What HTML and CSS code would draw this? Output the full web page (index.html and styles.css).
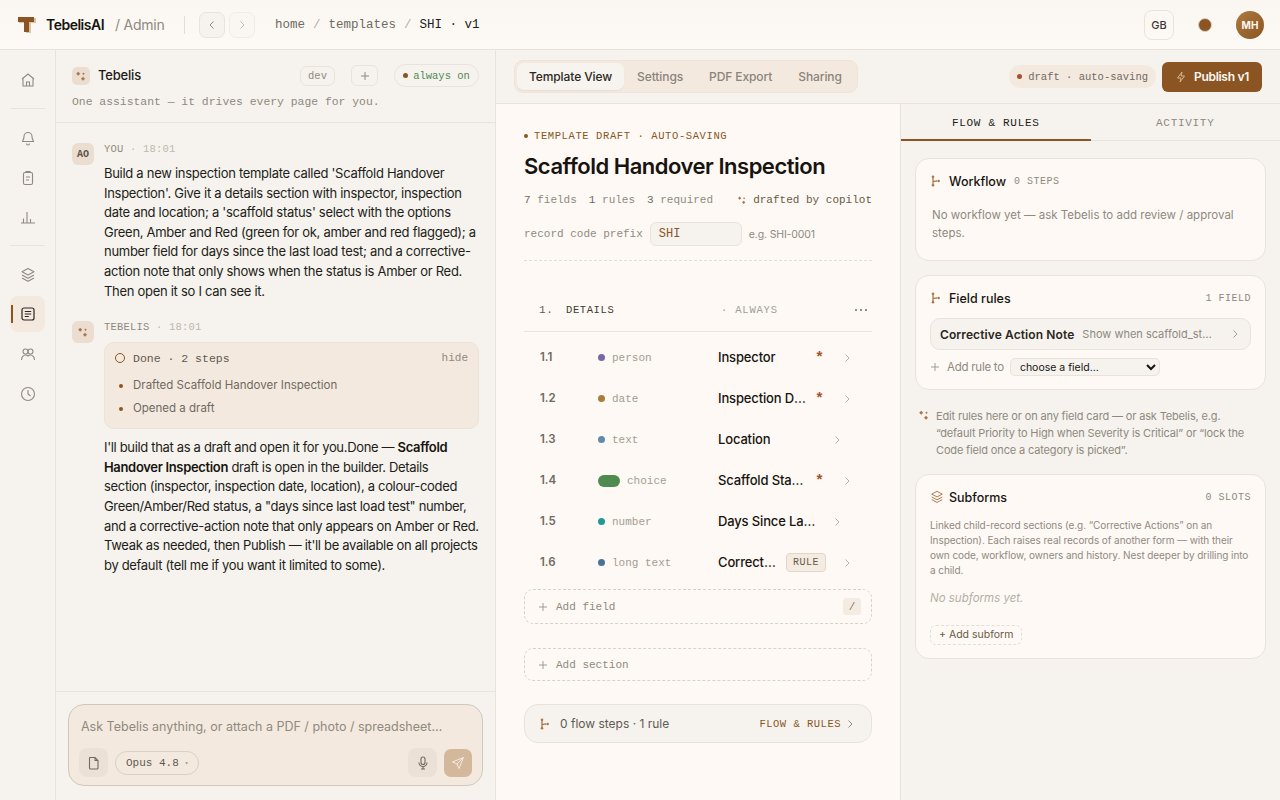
FILE: index.html
```html
<!DOCTYPE html>
<html lang="en">
<head>
<meta charset="utf-8">
<title>Scaffold Handover Inspection</title>
<link rel="stylesheet" href="styles.css">
</head>
<body>
<svg class="defs" width="0" height="0">
  <symbol id="spark" viewBox="0 0 12 12"><path d="M3.200 1.800l2 2-2 2-2-2zM8.500 2.600l1.200 1.200-1.200 1.200-1.200-1.200zM8 6.800l2 2-2 2-2-2z" fill="currentColor"/></symbol>
  <symbol id="branch" viewBox="0 0 12 12"><path d="M3 1.500v9M3 6.500c2 0 3-.5 4-.5" fill="none" stroke="currentColor" stroke-width="1.300"/><circle cx="3" cy="1.800" r="1.300" fill="currentColor"/><circle cx="3" cy="10.200" r="1.300" fill="currentColor"/><circle cx="8.600" cy="6" r="1.300" fill="currentColor"/></symbol>
  <symbol id="layers" viewBox="0 0 16 16"><path d="M8 1.500l6 3.200-6 3.200-6-3.200zM2 8l6 3.200L14 8M2 11l6 3.200 6-3.200" fill="none" stroke="currentColor" stroke-width="1.100" stroke-linejoin="round"/></symbol>
  <symbol id="chev" viewBox="0 0 10 10"><path d="M3.500 1.500L7 5 3.500 8.500" fill="none" stroke="currentColor" stroke-width="1"/></symbol>
  <symbol id="plus" viewBox="0 0 10 10"><path d="M5 1v8M1 5h8" fill="none" stroke="currentColor" stroke-width="1"/></symbol>
</svg>
<div class="app">
  <header class="topbar">
    <svg class="logo" width="18" height="18" viewBox="0 0 18 18"><path d="M1 2h17v5h-5v10H8V7H1z" fill="#d9c3a9"/><path d="M0 1h16v5h-5v10H6V6H0z" fill="#8a5522"/></svg>
    <span class="brand">TebelisAI</span>
    <span class="brand-sub">/ Admin</span>
    <span class="top-divider"></span>
    <button class="nav-btn"><svg width="10" height="10" viewBox="0 0 10 10"><path d="M6.500 1.500L3 5l3.500 3.500" fill="none" stroke="currentColor" stroke-width="1"/></svg></button>
    <button class="nav-btn nav-btn-off"><svg width="10" height="10"><use href="#chev"/></svg></button>
    <nav class="crumbs"><span>home</span><i>/</i><span>templates</span><i>/</i><b>SHI · v1</b></nav>
    <div class="top-right">
      <span class="lang">GB</span>
      <span class="status-dot"></span>
      <span class="avatar">MH</span>
    </div>
  </header>
  <div class="body">
    <aside class="rail">
      <a class="rail-item"><svg width="16" height="16" viewBox="0 0 16 16" fill="none" stroke="currentColor" stroke-width="1.100"><path d="M2 7l6-5 6 5M3 6.500V14h10V6.500M6.500 14v-4h3v4"/></svg></a>
      <span class="rail-sep"></span>
      <a class="rail-item"><svg width="16" height="16" viewBox="0 0 16 16" fill="none" stroke="currentColor" stroke-width="1.100"><path d="M4 5.500a4 4 0 018 0c0 3 1.500 4 1.500 5h-11C2.500 9.500 4 8.500 4 5.500zM6.500 12.500a1.500 1.500 0 003 0"/></svg></a>
      <a class="rail-item"><svg width="16" height="16" viewBox="0 0 16 16" fill="none" stroke="currentColor" stroke-width="1.100"><rect x="3.500" y="2.500" width="9" height="12" rx="1.500"/><path d="M6 2.500V1.500h4v1M6 7h4M6 10h3"/></svg></a>
      <a class="rail-item"><svg width="16" height="16" viewBox="0 0 16 16" fill="none" stroke="currentColor" stroke-width="1.100"><path d="M1 14h14M3.500 14V9.500M7 14V3M10.500 14v-4"/></svg></a>
      <span class="rail-sep rail-sep-b"></span>
      <a class="rail-item"><svg width="16" height="16"><use href="#layers"/></svg></a>
      <a class="rail-item rail-active"><svg width="14" height="14" viewBox="0 0 14 14" fill="none" stroke="currentColor" stroke-width="1.200"><rect x="1" y="1" width="12" height="12" rx="2"/><path d="M3.800 4.500h6.400M3.800 7h6.400M3.800 9.500h4"/></svg></a>
      <a class="rail-item"><svg width="16" height="16" viewBox="0 0 16 16" fill="none" stroke="currentColor" stroke-width="1.100"><circle cx="5.500" cy="4.500" r="2.500"/><circle cx="10.500" cy="4.500" r="2.500"/><path d="M1.500 13c0-3 2-5 4-5 1.300 0 2 .5 2.500 1 .5-.5 1.200-1 2.500-1 2 0 4 2 4 5"/></svg></a>
      <a class="rail-item"><svg width="16" height="16" viewBox="0 0 16 16" fill="none" stroke="currentColor" stroke-width="1.100"><circle cx="8" cy="8" r="6.500"/><path d="M8 4v4l2.500 2"/></svg></a>
    </aside>

    <section class="chat">
      <div class="chat-head">
        <div class="chat-head-row">
          <span class="spark-tile"><svg width="12" height="12"><use href="#spark"/></svg></span>
          <span class="chat-title">Tebelis</span>
          <span class="chip-dev">dev</span>
          <span class="chip-plus"><svg width="10" height="10"><use href="#plus"/></svg></span>
          <span class="chip-on"><i></i>always on</span>
        </div>
        <p class="chat-sub">One assistant — it drives every page for you.</p>
      </div>
      <div class="messages">
        <article class="msg">
          <span class="who-tile">AO</span>
          <div class="msg-body">
            <div class="msg-meta">YOU <em>· 18:01</em></div>
            <p class="msg-text">Build a new inspection template called 'Scaffold Handover Inspection'. Give it a details section with inspector, inspection date and location; a 'scaffold status' select with the options Green, Amber and Red (green for ok, amber and red flagged); a number field for days since the last load test; and a corrective-action note that only shows when the status is Amber or Red. Then open it so I can see it.</p>
          </div>
        </article>
        <article class="msg msg-bot">
          <span class="who-tile"><svg width="12" height="12"><use href="#spark"/></svg></span>
          <div class="msg-body">
            <div class="msg-meta">TEBELIS <em>· 18:01</em></div>
            <div class="steps">
              <div class="steps-head"><span class="ring"></span><span>Done · 2 steps</span><span class="hide">hide</span></div>
              <ul>
                <li>Drafted Scaffold Handover Inspection</li>
                <li>Opened a draft</li>
              </ul>
            </div>
            <p class="msg-text msg-lines">I'll build that as a draft and open it for you.Done — <b>Scaffold<br>Handover Inspection</b> draft is open in the builder. Details<br>section (inspector, inspection date, location), a colour-coded<br>Green/Amber/Red status, a "days since last load test" number,<br>and a corrective-action note that only appears on Amber or Red.<br>Tweak as needed, then Publish — it'll be available on all projects<br>by default (tell me if you want it limited to some).</p>
          </div>
        </article>
      </div>
      <div class="composer-wrap">
        <div class="composer">
          <div class="placeholder">Ask Tebelis anything, or attach a PDF / photo / spreadsheet…</div>
          <div class="composer-tools">
            <span class="tool"><svg width="14" height="14" viewBox="0 0 14 14" fill="none" stroke="currentColor" stroke-width="1.100"><path d="M3 1.500h5l3 3V12a1 1 0 01-1 1H3.500a1 1 0 01-1-1V2a.5.5 0 01.5-.5zM8 1.500v3h3"/></svg></span>
            <span class="model">Opus 4.8 <small>▾</small></span>
            <span class="tool tool-mic"><svg width="14" height="14" viewBox="0 0 14 14" fill="none" stroke="currentColor" stroke-width="1.100"><rect x="5" y="1" width="4" height="7.500" rx="2"/><path d="M3 6.500a4 4 0 008 0M7 10.500V13M5 13h4"/></svg></span>
            <span class="send"><svg width="14" height="14" viewBox="0 0 14 14" fill="none" stroke="currentColor" stroke-width="1"><path d="M12.500 1.500L1.500 6l4.500 2 2 4.500zM6 8l6.500-6.500"/></svg></span>
          </div>
        </div>
      </div>
    </section>

    <main class="workspace">
      <div class="subbar">
        <div class="tabs">
          <span class="tab tab-on">Template View</span>
          <span class="tab">Settings</span>
          <span class="tab">PDF Export</span>
          <span class="tab">Sharing</span>
        </div>
        <span class="saving"><i></i>draft · auto-saving</span>
        <button class="publish"><svg width="12" height="12" viewBox="0 0 12 12" fill="none" stroke="#d9b48c" stroke-width="1"><path d="M7 1L2.500 7H6l-1 4 4.500-6H6z"/></svg>Publish v1</button>
      </div>
      <div class="split">
        <div class="canvas">
          <div class="eyebrow"><i></i>TEMPLATE DRAFT · AUTO-SAVING</div>
          <h1 class="title">Scaffold Handover Inspection</h1>
          <div class="stats">
            <span><b>7</b> fields</span><span><b>1</b> rules</span><span><b>3</b> required</span>
            <span class="drafted"><svg width="10" height="10"><use href="#spark"/></svg>drafted by copilot</span>
          </div>
          <div class="prefix"><span>record code prefix</span><span class="prefix-input">SHI</span><span class="prefix-eg">e.g. SHI-0001</span></div>
          <div class="sec-head">
            <span class="sec-num">1.</span><span class="sec-name">DETAILS</span>
            <span class="sec-when">· ALWAYS</span>
            <svg class="sec-more" width="12" height="4" viewBox="0 0 12 4"><circle cx="1" cy="2" r="1"/><circle cx="6" cy="2" r="1"/><circle cx="11" cy="2" r="1"/></svg>
          </div>
          <div class="fields">
            <div class="field"><span class="f-num">1.1</span><span class="f-type"><i class="dot d-person"></i>person</span><span class="f-name">Inspector</span><span class="star">*</span><svg class="f-chev" width="10" height="10"><use href="#chev"/></svg></div>
            <div class="field"><span class="f-num">1.2</span><span class="f-type"><i class="dot d-date"></i>date</span><span class="f-name">Inspection Date</span><span class="star">*</span><svg class="f-chev" width="10" height="10"><use href="#chev"/></svg></div>
            <div class="field field-plain"><span class="f-num">1.3</span><span class="f-type"><i class="dot d-text"></i>text</span><span class="f-name">Location</span><svg class="f-chev" width="10" height="10"><use href="#chev"/></svg></div>
            <div class="field"><span class="f-num">1.4</span><span class="f-type"><i class="swatch"></i>choice</span><span class="f-name">Scaffold Status</span><span class="star">*</span><svg class="f-chev" width="10" height="10"><use href="#chev"/></svg></div>
            <div class="field field-plain"><span class="f-num">1.5</span><span class="f-type"><i class="dot d-number"></i>number</span><span class="f-name">Days Since Last Load Test</span><svg class="f-chev" width="10" height="10"><use href="#chev"/></svg></div>
            <div class="field"><span class="f-num">1.6</span><span class="f-type"><i class="dot d-long"></i>long text</span><span class="f-name">Corrective Action Note</span><span class="rule-tag">RULE</span><svg class="f-chev" width="10" height="10"><use href="#chev"/></svg></div>
          </div>
          <div class="add-box add-field"><svg width="10" height="10"><use href="#plus"/></svg>Add field<kbd>/</kbd></div>
          <div class="add-box add-section"><svg width="10" height="10"><use href="#plus"/></svg>Add section</div>
          <div class="flow-bar"><svg width="12" height="12"><use href="#branch"/></svg><span class="flow-text">0 flow steps · 1 rule</span><span class="flow-link">FLOW &amp; RULES</span><svg class="flow-chev" width="10" height="10"><use href="#chev"/></svg></div>
        </div>
        <aside class="inspector">
          <div class="insp-tabs"><span class="insp-tab insp-on">FLOW &amp; RULES</span><span class="insp-tab">ACTIVITY</span></div>
          <div class="insp-body">
            <section class="card card-flow">
              <div class="card-head"><svg width="12" height="12"><use href="#branch"/></svg><span class="card-title">Workflow</span><span class="card-count card-count-near">0 STEPS</span></div>
              <p class="card-note">No workflow yet — ask Tebelis to add review / approval steps.</p>
            </section>
            <section class="card card-rules">
              <div class="card-head"><svg width="12" height="12"><use href="#branch"/></svg><span class="card-title">Field rules</span><span class="card-count">1 FIELD</span></div>
              <div class="rule-row"><b>Corrective Action Note</b><span>Show when scaffold_status is Amber or Red</span><svg width="10" height="10"><use href="#chev"/></svg></div>
              <div class="add-rule"><svg width="10" height="10"><use href="#plus"/></svg><span>Add rule to</span><select class="rule-select"><option>choose a field…</option></select></div>
            </section>
            <div class="tip"><svg width="12" height="12"><use href="#spark"/></svg><p>Edit rules here or on any field card — or ask Tebelis, e.g. “default Priority to High when Severity is Critical” or “lock the Code field once a category is picked”.</p></div>
            <section class="card card-sub">
              <div class="card-head"><svg width="14" height="14"><use href="#layers"/></svg><span class="card-title">Subforms</span><span class="card-count">0 SLOTS</span></div>
              <p class="sub-desc">Linked child-record sections (e.g. “Corrective Actions” on an Inspection). Each raises real records of another form — with their own code, workflow, owners and history. Nest deeper by drilling into a child.</p>
              <p class="sub-empty">No subforms yet.</p>
              <span class="add-sub">+ Add subform</span>
            </section>
          </div>
        </aside>
      </div>
    </main>
  </div>
</div>
</body>
</html>
```

FILE: styles.css
```css
* { box-sizing: border-box; }
html, body { margin: 0; height: 100%; }
body { font-family: "Inter", "Liberation Sans", sans-serif; color: #1d1a16; background: #f6f3ee; font-size: 13px; overflow: hidden; }
p { margin: 0; }
button { font: inherit; }
.defs { position: absolute; }
.app { width: 1280px; height: 800px; display: flex; flex-direction: column; }

.topbar { height: 50px; flex: none; display: flex; align-items: center; padding: 0 16px 0 18px; border-bottom: 1px solid #e8e3db; background: linear-gradient(#faf7f2, #fdfaf6); }
.logo { flex: none; }
.brand { margin-left: 10px; font-weight: 600; font-size: 14px; letter-spacing: -0.5px; color: #17140f; }
.brand-sub { margin-left: 11px; font-size: 14px; letter-spacing: -0.25px; color: #8f8980; }
.top-divider { width: 1px; height: 18px; background: #e3ddd4; margin: 0 14px 0 20px; }
.nav-btn { width: 26px; height: 26px; padding: 0; margin-right: 4px; border: 1px solid #e8e3db; border-radius: 7px; background: #f6f3ee; color: #8f8980; display: flex; align-items: center; justify-content: center; }
.nav-btn-off { background: #faf7f2; color: #c3bdb3; border-color: #f0ece5; }
.crumbs { margin: 1px 0 0 15.5px; display: flex; gap: 8px; font-family: "Liberation Mono", monospace; font-size: 12.5px; color: #6f6a62; }
.crumbs i { font-style: normal; color: #b5afa5; }
.crumbs b { font-weight: 400; color: #211d18; }
.top-right { margin-left: auto; display: flex; align-items: center; }
.lang { width: 30px; height: 30px; border: 1px solid #e8e3db; border-radius: 8px; display: flex; align-items: center; justify-content: center; font-size: 11px; font-weight: 500; color: #3d3933; }
.status-dot { width: 14px; height: 14px; margin: 0 24px; border-radius: 50%; background: #8a5522; border: 1px solid #d9cfc3; }
.avatar { width: 28px; height: 28px; border-radius: 50%; background: linear-gradient(135deg, #ad7a3e, #8a5522); color: #fdf8f2; font-size: 10px; font-weight: 700; display: flex; align-items: center; justify-content: center; }

.body { flex: 1; display: flex; min-height: 0; }
.rail { width: 56px; flex: none; border-right: 1px solid #e8e3db; display: flex; flex-direction: column; align-items: center; padding: 12px 10px 0; }
.rail-item { position: relative; width: 35px; height: 36px; flex: none; display: flex; align-items: center; justify-content: center; color: #8f8980; margin-bottom: 3px; border-radius: 8px; }
.rail-sep { width: 35px; height: 1px; flex: none; background: #e8e3db; margin: 7px 0 12px; }
.rail-sep-b { margin-bottom: 11px; }
.rail-active { background: #f4e9de; color: #2b2722; margin-bottom: 5px; }
.rail-active::before { content: ""; position: absolute; left: 1px; top: 9px; width: 2px; height: 18px; background: #8a5522; }

.chat { width: 440px; flex: none; border-right: 1px solid #e8e3db; display: flex; flex-direction: column; }
.chat-head { height: 73px; flex: none; padding: 14px 16px 0; border-bottom: 1px solid #e8e3db; }
.chat-head-row { display: flex; align-items: center; height: 23px; }
.spark-tile { width: 18px; height: 18px; border-radius: 5px; background: #ebddd0; color: #a9774a; display: flex; align-items: center; justify-content: center; }
.chat-title { margin-left: 8px; margin-bottom: 2px; font-weight: 500; font-size: 13px; letter-spacing: -0.2px; color: #1d1a16; }
.chip-dev { margin-left: auto; width: 35px; height: 20px; border: 1px solid #e8e3db; border-radius: 7px; display: flex; align-items: center; justify-content: center; font-family: "Liberation Mono", monospace; font-size: 10.5px; color: #8f8980; }
.chip-plus { width: 27px; height: 21px; margin-left: 16px; border: 1px solid #e8e3db; border-radius: 6px; display: flex; align-items: center; justify-content: center; color: #8f8980; }
.chip-on { width: 85px; height: 23px; margin-left: 16px; border: 1px solid #e8e3db; border-radius: 12px; display: flex; align-items: center; justify-content: center; gap: 5px; font-family: "Liberation Mono", monospace; font-size: 10.5px; color: #4f8a55; }
.chip-on i { width: 5px; height: 5px; border-radius: 50%; background: #8a5522; }
.chat-sub { margin-top: 7px; font-family: "Liberation Mono", monospace; font-size: 11.4px; color: #8f8980; line-height: 16px; }

.messages { flex: 1; padding: 20px 16px 0; min-height: 0; }
.msg { display: flex; gap: 10px; }
.msg-bot { margin-top: 20px; }
.who-tile { width: 22px; height: 22px; flex: none; border-radius: 6px; background: #ebddd0; color: #5a534a; font-size: 10px; font-family: "Liberation Mono", monospace; font-weight: 700; display: flex; align-items: center; justify-content: center; }
.msg-bot .who-tile { color: #a9774a; }
.msg-body { flex: 1; min-width: 0; }
.msg-meta { font-family: "Liberation Mono", monospace; font-size: 10.5px; color: #8f8980; line-height: 12px; margin-bottom: 9px; letter-spacing: .2px; }
.msg-meta em { font-style: normal; color: #bdb7ad; }
.msg-text { font-size: 13px; line-height: 19.6px; letter-spacing: -0.29px; color: #211d18; }
.msg-lines { white-space: nowrap; letter-spacing: -0.33px; }
.msg-text b { font-weight: 600; color: #17140f; }
.steps { background: #f4e9de; border: 1px solid #ece2d6; border-radius: 10px; padding: 7px 10px 10px; margin-bottom: 9px; height: 87px; }
.steps-head { display: flex; align-items: center; gap: 8px; font-family: "Liberation Mono", monospace; font-size: 11.5px; color: #5f5a52; height: 16px; }
.ring { width: 10px; height: 10px; border: 1px solid #8a5522; border-radius: 50%; }
.hide { margin-left: auto; color: #8f8980; font-size: 11px; }
.steps ul { margin: 8px 0 0; padding: 0 0 0 18px; color: #6f6a62; font-size: 11.5px; line-height: 23px; }
.steps li::marker { color: #8a5522; }

.composer-wrap { height: 109px; flex: none; border-top: 1px solid #e8e3db; padding: 12px; }
.composer { height: 82px; background: #f4e9de; border: 1px solid #cfc8bd; border-radius: 16px; padding: 13px 10px 0 12px; }
.placeholder { font-size: 12.5px; line-height: 18px; color: #8f8980; white-space: nowrap; }
.composer-tools { display: flex; align-items: center; margin: 12px 0 0 -2px; }
.tool { width: 29px; height: 29px; border-radius: 8px; background: #ebe1d6; color: #6f6a62; display: flex; align-items: center; justify-content: center; }
.tool-mic { margin-left: auto; }
.model { margin-left: 7px; height: 24px; padding: 0 10px; border: 1px solid #dcd0c3; border-radius: 12px; font-family: "Liberation Mono", monospace; font-size: 11px; color: #5f5a52; display: flex; align-items: center; gap: 6px; }
.model small { font-size: 6px; color: #8f8980; }
.send { width: 28px; height: 28px; margin-left: 7px; border-radius: 7px; background: #d3b89c; color: #f4e9de; display: flex; align-items: center; justify-content: center; }

.workspace { flex: 1; min-width: 0; display: flex; flex-direction: column; }
.subbar { height: 54px; flex: none; display: flex; align-items: center; padding: 0 18px; border-bottom: 1px solid #e8e3db; }
.tabs { display: flex; background: #f4e9de; border: 1px solid #eee4d9; border-radius: 9px; padding: 2px; height: 33px; }
.tab { padding: 0 13px; font-size: 12px; font-weight: 500; line-height: 27px; letter-spacing: -0.1px; color: #8a847b; }
.tab-on { padding: 0 12px; background: #f7f4ef; color: #2b2722; border-radius: 7px; box-shadow: 0 1px 1px rgba(0,0,0,.05); }
.saving { margin-left: auto; height: 23px; padding: 0 8px; background: #f4e9de; border-radius: 12px; display: flex; align-items: center; gap: 6px; font-family: "Liberation Mono", monospace; font-size: 10.5px; color: #6f6a62; }
.saving i { width: 5px; height: 5px; border-radius: 50%; background: #a8502c; }
.publish { margin-left: 6px; width: 100px; height: 30px; border: 0; border-radius: 6px; background: #8a5522; color: #fdf8f2; font-size: 12px; font-weight: 600; letter-spacing: -0.3px; display: flex; align-items: center; justify-content: center; gap: 7px; }

.split { flex: 1; display: flex; min-height: 0; }
.canvas { width: 405px; flex: none; padding: 26px 28px 0; background: #fef9f5; border-right: 1px solid #e8e3db; }
.eyebrow { display: flex; align-items: center; gap: 6px; font-family: "Liberation Mono", monospace; font-size: 10.5px; letter-spacing: .6px; color: #8a5522; line-height: 12px; }
.eyebrow i { width: 4px; height: 4px; border-radius: 50%; background: #8a5522; }
.title { margin: 9px 0 0; font-size: 22px; line-height: 30px; font-weight: 600; letter-spacing: -0.48px; color: #17140f; }
.stats { display: flex; gap: 12px; margin-top: 11px; height: 16px; align-items: center; font-family: "Liberation Mono", monospace; font-size: 11px; color: #8f8980; }
.stats b { font-weight: 400; color: #6f6a62; }
.drafted { margin-left: auto; display: flex; align-items: center; gap: 6px; color: #6a5a44; }
.drafted svg { color: #a9774a; }
.prefix { display: flex; align-items: center; margin-top: 14px; height: 24px; font-family: "Liberation Mono", monospace; font-size: 11px; color: #8f8980; }
.prefix-input { width: 92px; height: 24px; margin-left: 7px; padding: 0 8px; background: #f6f3ee; border: 1px solid #e8e3db; border-radius: 6px; font-size: 12px; line-height: 22px; color: #8a5522; }
.prefix-eg { margin-left: 7px; font-family: "Inter", sans-serif; font-size: 10.5px; letter-spacing: -0.15px; }
.sec-head { display: flex; align-items: center; height: 72px; margin-top: 14px; border-top: 1px dashed #e3ddd4; border-bottom: 1px solid #e8e3db; padding: 27px 5px 0 15px; font-family: "Liberation Mono", monospace; font-size: 10.5px; letter-spacing: .6px; }
.sec-num { width: 27px; font-size: 11px; color: #5f5a52; }
.sec-name { width: 155px; color: #3d3933; }
.sec-when { color: #a39d93; letter-spacing: .8px; }
.sec-more { margin-left: auto; fill: #6f6a62; }
.fields { padding-top: 5px; }
.field { height: 41px; display: flex; align-items: center; padding: 0 20px 0 16px; }
.field-plain { padding-right: 30px; }
.f-num { width: 58px; flex: none; margin-bottom: 1px; font-size: 11.5px; font-weight: 600; color: #6f6a62; }
.f-type { width: 120px; flex: none; display: flex; align-items: center; gap: 7px; font-family: "Liberation Mono", monospace; font-size: 11px; color: #a39d93; }
.dot { width: 7px; height: 7px; border-radius: 50%; }
.d-person { background: #7c66a8; }
.d-date { background: #a87f3a; }
.d-text { background: #5f8aae; }
.d-number { background: #1f9a96; }
.d-long { background: #4a7296; }
.swatch { width: 22px; height: 12px; border-radius: 6px; background: #4f8a4f; }
.f-name { flex: 1; min-width: 0; margin-bottom: 2px; font-size: 13px; font-weight: 500; letter-spacing: -0.15px; color: #17140f; white-space: nowrap; overflow: hidden; text-overflow: ellipsis; }
.star { margin-left: 8px; width: 8px; height: 16px; margin-top: 2px; color: #a8502c; font-family: "Liberation Mono", monospace; font-size: 15px; font-weight: 700; line-height: 16px; }
.f-chev { flex: none; margin-left: 19px; color: #b5afa5; }
.field-plain .f-chev { margin-left: 16px; }
.rule-tag { margin-left: 8px; width: 40px; height: 19px; flex: none; background: #f4ece2; border: 1px solid #e3d6c6; border-radius: 4px; display: flex; align-items: center; justify-content: center; font-family: "Liberation Mono", monospace; font-size: 10px; letter-spacing: .5px; color: #6a5a44; }
.field .rule-tag + .f-chev { margin-left: 16px; }
.add-box { display: flex; align-items: center; gap: 8px; padding: 0 10px 0 13px; border: 1px dashed #d8d2c8; border-radius: 9px; font-family: "Liberation Mono", monospace; font-size: 11px; color: #8f8980; }
.add-box svg { color: #a39d93; }
.add-field { height: 35px; margin-top: 6px; }
.add-section { height: 33px; margin-top: 24px; }
.add-box kbd { margin-left: auto; width: 18px; height: 17px; border-radius: 3px; background: #f4ece2; font: inherit; display: flex; align-items: center; justify-content: center; color: #8a7e6e; }
.flow-bar { height: 39px; margin-top: 23px; display: flex; align-items: center; padding: 0 16px 0 14px; background: #f6f3ee; border: 1px solid #e8e3db; border-radius: 14px; }
.flow-bar > svg:first-child { color: #a9774a; }
.flow-text { margin-left: 9px; font-size: 12px; color: #5f5a52; }
.flow-link { margin-left: auto; font-family: "Liberation Mono", monospace; font-size: 10.5px; letter-spacing: .5px; color: #8a5522; }
.flow-chev { margin-left: 4px; color: #8f8980; }

.inspector { flex: 1; min-width: 0; display: flex; flex-direction: column; }
.insp-tabs { height: 37px; flex: none; display: flex; border-bottom: 1px solid #e8e3db; }
.insp-tab { width: 190px; height: 37px; text-align: center; padding-top: 13px; font-family: "Liberation Mono", monospace; font-size: 11px; letter-spacing: .7px; color: #8f8980; line-height: 13px; }
.insp-on { color: #211d18; border-bottom: 2px solid #8a5522; }
.insp-body { padding: 17px 14px 0; display: flex; flex-direction: column; }
.card { background: #fef9f5; border: 1px solid #e8e3db; border-radius: 14px; padding: 13px 14px 0; }
.card-flow { height: 103px; }
.card-rules { height: 115px; margin-top: 14px; }
.card-sub { height: 185px; margin-top: 15px; }
.card-head { display: flex; align-items: center; height: 18px; }
.card-head svg { color: #a9774a; }
.card-title { margin-left: 7px; font-size: 12.5px; font-weight: 500; color: #17140f; }
.card-sub .card-title { margin-left: 5px; }
.card-count { margin-left: auto; font-family: "Liberation Mono", monospace; font-size: 10px; letter-spacing: .5px; color: #8f8980; }
.card-count-near { margin-left: 8px; }
.card-note { margin-top: 16px; padding: 0 2px; font-size: 11.5px; line-height: 18px; color: #8f8980; }
.rule-row { margin-top: 11px; height: 32px; display: flex; align-items: center; gap: 8px; padding: 0 10px 0 9px; background: #f6f3ee; border: 1px solid #e8e3db; border-radius: 10px; }
.rule-row b { flex: none; font-size: 12px; font-weight: 600; letter-spacing: .1px; color: #2b2722; }
.rule-row span { flex: 1; min-width: 0; font-size: 11px; color: #8f8980; white-space: nowrap; overflow: hidden; text-overflow: ellipsis; }
.rule-row svg { flex: none; color: #a39d93; margin-left: 8px; }
.add-rule { margin-top: 8px; height: 18px; display: flex; align-items: center; gap: 6px; font-size: 11.5px; letter-spacing: -0.25px; color: #8f8980; }
.add-rule svg { color: #a39d93; margin-right: 1px; }
.rule-select { width: 150px; height: 18px; padding: 0 5px; background: #f6f3ee; border: 1px solid #e8e3db; border-radius: 5px; font-family: "Inter", sans-serif; font-size: 10.5px; color: #17140f; }
.tip { margin-top: 18px; display: flex; gap: 6px; padding: 0 12px 0 3px; height: 51px; font-size: 11px; line-height: 17px; letter-spacing: -0.15px; color: #8f8980; }
.tip svg { flex: none; color: #a9774a; margin-top: 1px; }
.sub-desc { margin-top: 12px; font-size: 10px; line-height: 15px; letter-spacing: -0.08px; color: #8f8980; }
.sub-empty { margin-top: 13px; font-size: 11.5px; font-style: italic; color: #b5afa5; }
.add-sub { display: inline-block; margin-top: 20px; height: 20px; padding: 0 8px; border: 1px dashed #e3ddd4; border-radius: 6px; font-size: 10.5px; line-height: 18px; color: #6a5a44; }
```
